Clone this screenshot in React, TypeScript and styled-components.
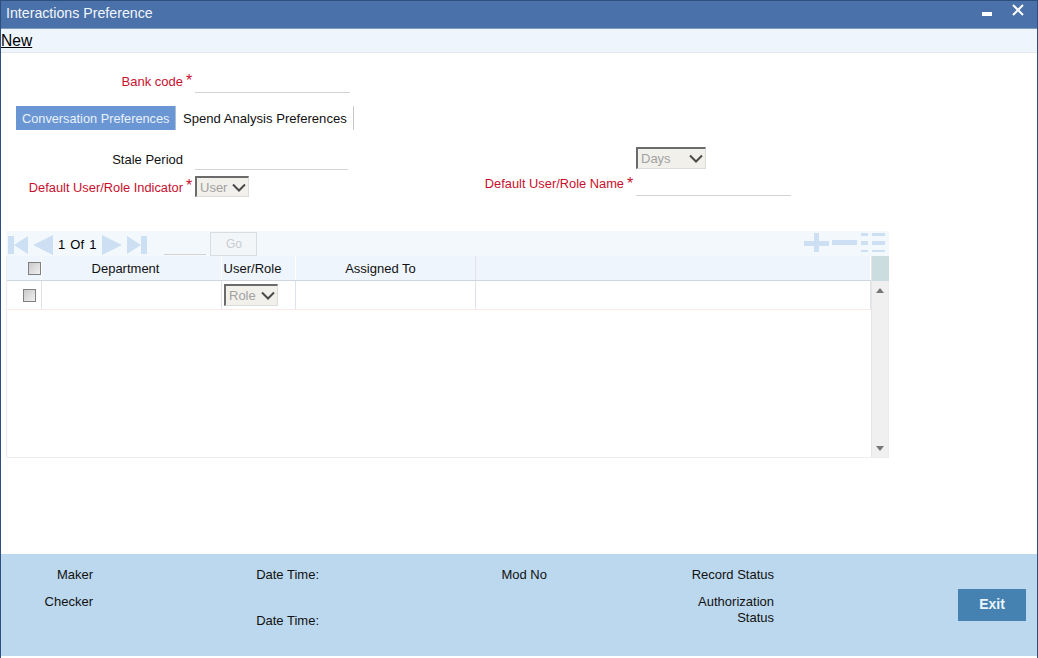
import React from "react";
import styled, { createGlobalStyle } from "styled-components";

const Global = createGlobalStyle`
  html, body { margin: 0; padding: 0; background: #fff; overflow: hidden; }
  body { font-family: "Liberation Sans", Arial, sans-serif; font-size: 13px; color: #000; }
`;
const Win = styled.div`
  width: 1038px; height: 658px; box-sizing: border-box; display: flex; flex-direction: column;
  border-left: 1px solid #2c4f7f; border-right: 1px solid #2c4f7f; border-top: 1px solid #2c4f7f; background: #fff;
`;
const TitleBar = styled.div`
  height: 28px; box-sizing: border-box; flex: none; background: #4a71a9; border-bottom: 1px solid #7f9cbd; color: #f2f6fb; font-size: 14.2px;
  display: flex; align-items: center; justify-content: space-between; padding: 0 13px 3px 5px;
`;
const Controls = styled.div`display: flex; align-items: flex-start; gap: 20px; margin-top: -5px;`;
const Menu = styled.div`
  height: 24px; box-sizing: border-box; flex: none; background: #eef5fd; border-bottom: 1px solid #e4e8ee; line-height: 23px; font-size: 15.6px;
  a { color: #000; text-decoration: underline; }
`;
const Main = styled.div`flex: 1; min-height: 0; display: flex; flex-direction: column;`;
const Row = styled.div<{ $h: number; $top?: number }>`
  display: flex; height: ${p => p.$h}px; margin-top: ${p => p.$top ?? 0}px; align-items: flex-start;
`;
const Label = styled.div<{ $w: number; $req?: boolean; $mt?: number; $tight?: boolean }>`
  width: ${p => p.$w}px; flex: none; text-align: right; margin-top: ${p => p.$mt ?? 0}px; line-height: 16px; white-space: nowrap;
  color: ${p => p.$req ? "#c8102e" : "#111"}; font-size: ${p => p.$tight ? 12.85 : 13}px;
`;
const Star = styled.span<{ $mt?: number }>`
  width: 12px; flex: none; color: #c8102e; font-size: 16px; line-height: 16px; text-align: center; margin-top: ${p => p.$mt ?? 0}px;
`;
const Input = styled.div<{ $w: number; $h?: number }>`
  width: ${p => p.$w}px; height: ${p => p.$h ?? 22}px; flex: none; border-bottom: 1px solid #d3d3d3;
`;
const Sel = styled.div<{ $w: number; $h?: number }>`
  width: ${p => p.$w}px; height: ${p => p.$h ?? 22}px; box-sizing: border-box; flex: none; background: #f1f0eb;
  border-style: solid; border-width: 2px 1px 1px 2px; border-color: #6b6b6b #dcdcd8 #dcdcd8 #6b6b6b;
  display: flex; align-items: center; justify-content: space-between; padding: 0 2px 0 3px; color: #a2a2a2;
`;
const GapBlock = styled.div<{ $w: number }>`width: ${p => p.$w}px; flex: none;`;
const Tabs = styled.div`display: flex; height: 24px; margin: 12px 0 0 15px;`;
const Tab = styled.div<{ $on?: boolean }>`
  height: 24px; line-height: 25px; box-sizing: border-box; white-space: nowrap;
  padding: 0 ${p => p.$on ? 6 : 7}px; font-size: ${p => p.$on ? 12.75 : 13.1}px;
  background: ${p => p.$on ? "#6a97d3" : "#fff"}; color: ${p => p.$on ? "#e9f1fb" : "#111"};
  border-right: 1px solid ${p => p.$on ? "#a9c0dd" : "#c8c8c8"};
  width: ${p => p.$on ? 160 : 178}px;
`;
const GridWrap = styled.div`width: 883px; margin: 31px 0 0 5px;`;
const Pager = styled.div`
  height: 25px; background: #f3f8fd; display: flex; align-items: flex-start; padding-right: 3px;
`;
const NavIcon = styled.svg<{ $ml?: number }>`flex: none; margin: 3px 0 0 ${p => p.$ml ?? 0}px;`;
const AddIcons = styled.svg`flex: none; margin-top: 2px;`;
const PageText = styled.span`margin: 6px 6px 0 5px; word-spacing: 1.5px; line-height: 15px; white-space: nowrap;`;
const PageInput = styled.div`width: 42px; height: 23px; margin-left: 17px; border-bottom: 1px solid #d3d3d3; flex: none;`;
const Go = styled.div`
  width: 47px; height: 24px; margin: 1px 0 0 4px; box-sizing: border-box; border: 1px solid #d8dde2; background: #f3f6f9;
  color: #c9cdd2; font-size: 12px; text-align: center; line-height: 22px;
`;
const Spacer = styled.div`flex: 1;`;
const Table = styled.div`display: flex; height: 202px; border: solid #ececec; border-width: 0 1px 1px 1px; box-sizing: border-box;`;
const TableBody = styled.div`flex: 1; min-width: 0;`;
const Head = styled.div`
  height: 24px; display: grid; grid-template-columns: 35px 180px 74px 180px 1fr; background: #eef5fd; border-bottom: 1px solid #d0d6dd;
`;
const DataRow = styled.div`
  height: 28px; display: grid; grid-template-columns: 35px 180px 74px 180px 1fr; border-bottom: 1px solid #f8ebe5;
`;
const HCell = styled.div<{ $pr?: number; $pl?: number; $line?: boolean }>`
  box-sizing: border-box; border-right: 1px solid ${p => p.$line ? "#dde3e9" : "#fff"}; padding: 0 ${p => p.$pr ?? 0}px 0 ${p => p.$pl ?? 0}px;
  display: flex; justify-content: center; align-items: center; color: #111; white-space: nowrap;
`;
const Cell = styled.div<{ $start?: boolean; $pl?: number }>`
  box-sizing: border-box; border-right: 1px solid #dde3e9; display: flex; align-items: center;
  justify-content: ${p => p.$start ? "flex-start" : "center"}; padding-left: ${p => p.$pl ?? 0}px;
`;
const Check = styled.div`
  width: 13px; height: 13px; flex: none; box-sizing: border-box; border: 1px solid #808080; background: linear-gradient(135deg, #c9c9c9, #f0f0f0);
`;
const Scroll = styled.div`
  width: 17px; flex: none; background: #f0f0f0; display: flex; flex-direction: column; align-items: center; justify-content: space-between;
  border-left: 1px solid #e6e6e6; box-sizing: border-box; padding-bottom: 6px;
`;
const ScrollHead = styled.div`width: 17px; height: 25px; background: #ccdde0; flex: none; margin-bottom: 7px;`;
const Arrow = styled.div<{ $up?: boolean }>`
  width: 0; height: 0; border-left: 4px solid transparent; border-right: 4px solid transparent;
  ${p => p.$up ? "border-bottom: 5px solid #777;" : "border-top: 5px solid #777;"}
`;
const ScrollTop = styled.div`display: flex; flex-direction: column; align-items: center;`;
const Footer = styled.div`
  height: 102px; flex: none; background: #bcd8ee; margin-bottom: 2px; display: flex; align-items: flex-start;
`;
const FootCol = styled.div<{ $w: number }>`
  width: ${p => p.$w}px; flex: none; text-align: right; color: #111; display: flex; flex-direction: column; line-height: 16px;
`;
const FootText = styled.div<{ $mt: number }>`margin-top: ${p => p.$mt}px;`;
const Exit = styled.div`
  width: 68px; height: 32px; margin: 35px 0 0 184px; background: #4682b1; color: #eaf5fb; font-weight: 700; font-size: 14px;
  text-align: center; line-height: 31px; flex: none;
`;

const Chev = () => (
  <svg width="14" height="9" viewBox="0 0 14 9"><path d="M1 1.5 L7 7.5 L13 1.5" fill="none" stroke="#4a4a4a" strokeWidth="2" /></svg>
);
const Nav = ({ d, w, ml }: { d: string; w: number; ml?: number }) => (
  <NavIcon $ml={ml} width={w} height="21" viewBox={`0 0 ${w} 21`}><path d={d} fill="#cddff3" /></NavIcon>
);

export default function App() {
  return (
    <Win>
      <Global />
      <TitleBar>
        <span>Interactions Preference</span>
        <Controls>
          <svg width="10" height="14" viewBox="0 0 10 14"><rect y="8" width="10" height="4" fill="#fff" /></svg>
          <svg width="12" height="12" viewBox="0 0 12 12"><path d="M1 1 L11 11 M11 1 L1 11" stroke="#fff" strokeWidth="2" /></svg>
        </Controls>
      </TitleBar>
      <Menu><a>New</a></Menu>
      <Main>
        <Row $h={41}>
          <Label $w={182} $req $mt={21}>Bank code</Label>
          <Star $mt={20}>*</Star>
          <Input $w={155} $h={39} />
        </Row>
        <Tabs>
          <Tab $on>Conversation Preferences</Tab>
          <Tab>Spend Analysis Preferences</Tab>
        </Tabs>
        <Row $h={29} $top={17}>
          <Label $w={182} $mt={5}>Stale Period</Label>
          <Star />
          <Input $w={153} $h={22} />
          <GapBlock $w={288} />
          <Sel $w={70} $h={22}><span>Days</span><Chev /></Sel>
        </Row>
        <Row $h={24}>
          <Label $w={182} $req $tight $mt={4}>Default User/Role Indicator</Label>
          <Star $mt={2}>*</Star>
          <Sel $w={54} $h={21}><span>User</span><Chev /></Sel>
          <Label $w={375} $req $tight>Default User/Role Name</Label>
          <Star>*</Star>
          <Input $w={155} $h={19} />
        </Row>
        <GridWrap>
          <Pager>
            <Nav w={20} ml={2} d="M0 2 H6 V20 H0 Z M6 11 L20 2 V20 Z" />
            <Nav w={20} ml={5} d="M0 11 L20 1 V21 Z" />
            <PageText>1 Of 1</PageText>
            <Nav w={20} d="M0 1 L20 11 L0 21 Z" />
            <Nav w={20} ml={5} d="M0 2 L14 11 L0 20 Z M14 2 H20 V20 H14 Z" />
            <PageInput />
            <Go>Go</Go>
            <Spacer />
            <AddIcons width="82" height="20" viewBox="0 0 82 20">
              <path d="M0 8 H10 V0 H15 V8 H25 V13 H15 V19 H10 V13 H0 Z M28 7 H53 V12 H28 Z M57 0 H64 V3 H57 Z M68 0 H81 V3 H68 Z M57 8 H64 V12 H57 Z M68 8 H81 V12 H68 Z M57 17 H64 V19 H57 Z M68 17 H81 V19 H68 Z" fill="#cddff3" />
            </AddIcons>
          </Pager>
          <Table>
            <TableBody>
              <Head>
                <HCell $pl={21}><Check /></HCell>
                <HCell $pr={12}>Department</HCell>
                <HCell $pr={12}>User/Role</HCell>
                <HCell $pr={10} $line>Assigned To</HCell>
                <HCell />
              </Head>
              <DataRow>
                <Cell $pl={10}><Check /></Cell>
                <Cell />
                <Cell $start $pl={2}><Sel $w={54} $h={22}><span>Role</span><Chev /></Sel></Cell>
                <Cell />
                <Cell />
              </DataRow>
            </TableBody>
            <Scroll>
              <ScrollTop>
                <ScrollHead />
                <Arrow $up />
              </ScrollTop>
              <Arrow />
            </Scroll>
          </Table>
        </GridWrap>
      </Main>
      <Footer>
        <FootCol $w={92}><FootText $mt={13}>Maker</FootText><FootText $mt={11}>Checker</FootText></FootCol>
        <FootCol $w={226}><FootText $mt={13}>Date Time:</FootText><FootText $mt={30}>Date Time:</FootText></FootCol>
        <FootCol $w={228}><FootText $mt={13}>Mod No</FootText></FootCol>
        <FootCol $w={227}>
          <FootText $mt={13}>Record Status</FootText>
          <FootText $mt={11}>Authorization</FootText>
          <FootText $mt={0}>Status</FootText>
        </FootCol>
        <Exit>Exit</Exit>
      </Footer>
    </Win>
  );
}
